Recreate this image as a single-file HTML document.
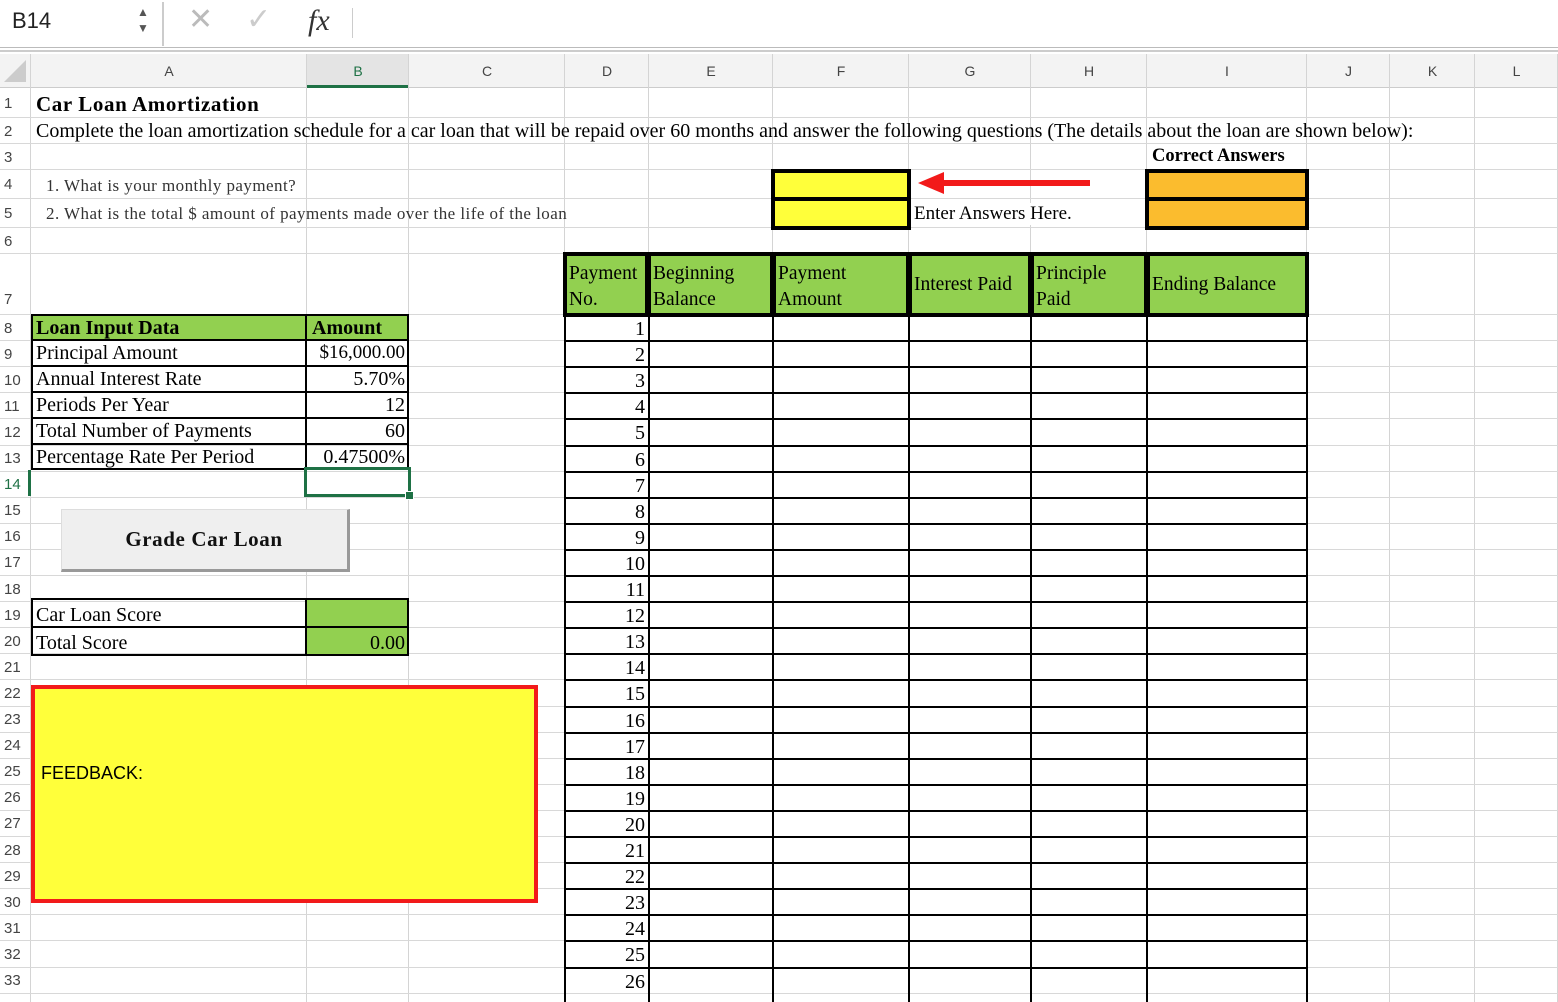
<!DOCTYPE html><html><head><meta charset="utf-8"><style>
body{margin:0;width:1558px;height:1002px;overflow:hidden;background:#fff;position:relative;font-family:"Liberation Serif",serif}
div{position:absolute;box-sizing:border-box}
.rn{left:0;width:31px;font:15px "Liberation Sans",sans-serif;color:#444;padding-left:4px;display:flex;align-items:center}
.t{font-size:20px;color:#000;white-space:nowrap}
.h{font-size:19.5px}
</style></head><body>
<div style="left:0;top:0;width:1558px;height:48px;background:#fff;border-bottom:1px solid #bbb"></div>
<div style="left:12px;top:8px;font:22px 'Liberation Sans',sans-serif;color:#222">B14</div>
<div style="left:137px;top:4px;font:12px 'Liberation Sans';color:#555;line-height:16px">▲<br>▼</div>
<div style="left:162px;top:2px;width:2px;height:44px;background:#ccc"></div>
<div style="left:188px;top:2px;font:30px 'Liberation Sans';color:#bbb">✕</div>
<div style="left:246px;top:2px;font:30px 'DejaVu Sans';color:#ccc">✓</div>
<div style="left:308px;top:4px;font:italic 30px 'Liberation Serif';color:#333">fx</div>
<div style="left:352px;top:8px;width:1px;height:30px;background:#ccc"></div>
<div style="left:0;top:50px;width:1558px;height:2px;background:#ccc"></div>
<div style="left:0;top:54px;width:1558px;height:34px;background:#f3f3f3;border-bottom:1px solid #ccc"></div>
<div style="left:307px;top:54px;width:102px;height:34px;background:#e4e4e4;border-bottom:3px solid #1e7145"></div>
<div style="left:4px;top:60px;width:0;height:0;border-left:22px solid transparent;border-bottom:22px solid #ccc"></div>
<div id="g"></div>
<script>
var cols=[0,31,307,409,565,649,773,909,1031,1147,1307,1390,1475,1558],L="ABCDEFGHIJKL",h="";
for(var i=1;i<cols.length;i++){h+='<div style="left:'+(cols[i]-1)+'px;top:54px;width:1px;height:948px;background:#d4d4d4"></div>';}
for(var i=1;i<cols.length-1;i++){var a=cols[i],b=cols[i+1];h+='<div style="left:'+a+'px;top:63px;width:'+(b-a)+'px;text-align:center;font:14px \'Liberation Sans\';color:'+(i==2?'#1e7145':'#444')+'">'+L[i-1]+'</div>';}
var tops=[88,118,144,170,199,228,254];for(var n=8;n<=34;n++)tops.push(315+(n-8)*26.1);
for(var r=1;r<=33;r++){var t=tops[r-1],b=tops[r];h+='<div style="left:0;top:'+(b-1)+'px;width:1558px;height:1px;background:#d8d8d8"></div>';
h+='<div class="rn" style="top:'+(r==7?t+30:t)+'px;height:'+(r==7?b-t-30:b-t)+'px;'+(r==14?'color:#1e7145;':'')+'">'+r+'</div>';}
var tc=[565,649,773,909,1031,1147,1307];
for(var n=8;n<=33;n++){var t=tops[n-1];h+='<div style="left:565px;top:'+(t-1)+'px;width:742px;height:2px;background:#000"></div>';
h+='<div class="t" style="left:565px;top:'+(t+3)+'px;width:80px;text-align:right">'+(n-7)+'</div>';}
for(var i=0;i<tc.length;i++)h+='<div style="left:'+(tc[i]-1)+'px;top:254px;width:2px;height:748px;background:#000"></div>';
document.getElementById('g').innerHTML=h;
</script>
<div class="t" style="left:36px;top:92px;font-weight:bold;font-size:21px;letter-spacing:0.6px">Car Loan Amortization</div>
<div class="t" style="left:36px;top:120px">Complete the loan amortization schedule for a car loan that will be repaid over 60 months and answer the following questions (The details about the loan are shown below):</div>
<div class="t" style="left:1152px;top:146px;font-weight:bold;font-size:18.5px;background:#fff">Correct Answers</div>
<div style="left:46px;top:176px;font-size:17px;letter-spacing:0.45px;color:#333">1. What is your monthly payment?</div>
<div style="left:46px;top:204px;font-size:17px;letter-spacing:0.45px;color:#333">2. What is the total $ amount of payments made over the life of the loan</div>
<div style="left:771px;top:169px;width:140px;height:61px;background:#ffff3a;border:4px solid #000"></div>
<div style="left:771px;top:197px;width:140px;height:4px;background:#000"></div>
<div style="left:1145px;top:169px;width:164px;height:61px;background:#fbbc2e;border:4px solid #000"></div>
<div style="left:1145px;top:197px;width:164px;height:4px;background:#000"></div>
<div style="left:940px;top:180px;width:150px;height:6px;background:#f21a1a"></div>
<div style="left:918px;top:172px;width:0;height:0;border-top:11px solid transparent;border-bottom:11px solid transparent;border-right:26px solid #f21a1a"></div>
<div class="t" style="left:914px;top:203px;font-size:19px;background:#fff">Enter Answers Here.</div>
<div style="left:563px;top:252px;width:746px;height:65px;background:#92d050;border:4px solid #000"></div>
<div class="t h" style="left:569px;top:261px;line-height:26px">Payment<br>No.</div>
<div class="t h" style="left:653px;top:261px;line-height:26px">Beginning<br>Balance</div>
<div class="t h" style="left:778px;top:261px;line-height:26px">Payment<br>Amount</div>
<div class="t h" style="left:914px;top:274px">Interest Paid</div>
<div class="t h" style="left:1036px;top:261px;line-height:26px">Principle<br>Paid</div>
<div class="t h" style="left:1152px;top:274px">Ending Balance</div>
<div style="left:645px;top:252px;width:6px;height:65px;background:#000"></div>
<div style="left:770px;top:252px;width:6px;height:65px;background:#000"></div>
<div style="left:906px;top:252px;width:6px;height:65px;background:#000"></div>
<div style="left:1028px;top:252px;width:6px;height:65px;background:#000"></div>
<div style="left:1144px;top:252px;width:6px;height:65px;background:#000"></div>
<div style="left:31px;top:314px;width:378px;height:156px;border:2px solid #000"></div>
<div style="left:33px;top:316px;width:374px;height:24px;background:#92d050"></div>
<div style="left:305px;top:314px;width:2px;height:156px;background:#000"></div>
<div style="left:31px;top:339px;width:378px;height:2px;background:#000"></div>
<div style="left:31px;top:365px;width:378px;height:2px;background:#000"></div>
<div style="left:31px;top:391px;width:378px;height:2px;background:#000"></div>
<div style="left:31px;top:417px;width:378px;height:2px;background:#000"></div>
<div style="left:31px;top:443px;width:378px;height:2px;background:#000"></div>
<div class="t" style="left:36px;top:317px;font-weight:bold">Loan Input Data</div>
<div class="t" style="left:312px;top:317px;font-weight:bold">Amount</div>
<div class="t" style="left:36px;top:342px">Principal Amount</div>
<div class="t" style="left:36px;top:368px">Annual Interest Rate</div>
<div class="t" style="left:36px;top:394px">Periods Per Year</div>
<div class="t" style="left:36px;top:420px">Total Number of Payments</div>
<div class="t" style="left:36px;top:446px">Percentage Rate Per Period</div>
<div class="t" style="left:307px;top:342px;width:98px;text-align:right;font-size:19px">$16,000.00</div>
<div class="t" style="left:307px;top:368px;width:98px;text-align:right">5.70%</div>
<div class="t" style="left:307px;top:394px;width:98px;text-align:right">12</div>
<div class="t" style="left:307px;top:420px;width:98px;text-align:right">60</div>
<div class="t" style="left:307px;top:446px;width:98px;text-align:right">0.47500%</div>
<div style="left:304px;top:467px;width:107px;height:30px;border:3px solid #1e7145"></div>
<div style="left:405px;top:491px;width:9px;height:9px;background:#1e7145;border:1px solid #fff"></div>
<div style="left:28px;top:470px;width:3px;height:26px;background:#1e7145"></div>
<div style="left:61px;top:509px;width:289px;height:63px;background:#efefef;border-right:3px solid #999;border-bottom:3px solid #999;border-left:1px solid #ddd;border-top:1px solid #ddd"></div>
<div class="t" style="left:61px;top:527px;width:286px;text-align:center;font-weight:bold;font-size:21px;letter-spacing:0.6px;color:#111">Grade Car Loan</div>
<div style="left:31px;top:598px;width:378px;height:58px;border:2px solid #000"></div>
<div style="left:307px;top:600px;width:100px;height:54px;background:#92d050"></div>
<div style="left:305px;top:598px;width:2px;height:58px;background:#000"></div>
<div style="left:31px;top:626px;width:378px;height:2px;background:#000"></div>
<div class="t" style="left:36px;top:604px">Car Loan Score</div>
<div class="t" style="left:36px;top:632px">Total Score</div>
<div class="t" style="left:307px;top:632px;width:98px;text-align:right">0.00</div>
<div style="left:31px;top:685px;width:507px;height:218px;background:#ffff3a;border:4px solid #f21a1a"></div>
<div style="left:41px;top:763px;font:18px 'Liberation Sans',sans-serif;color:#000">FEEDBACK:</div>
</body></html>
